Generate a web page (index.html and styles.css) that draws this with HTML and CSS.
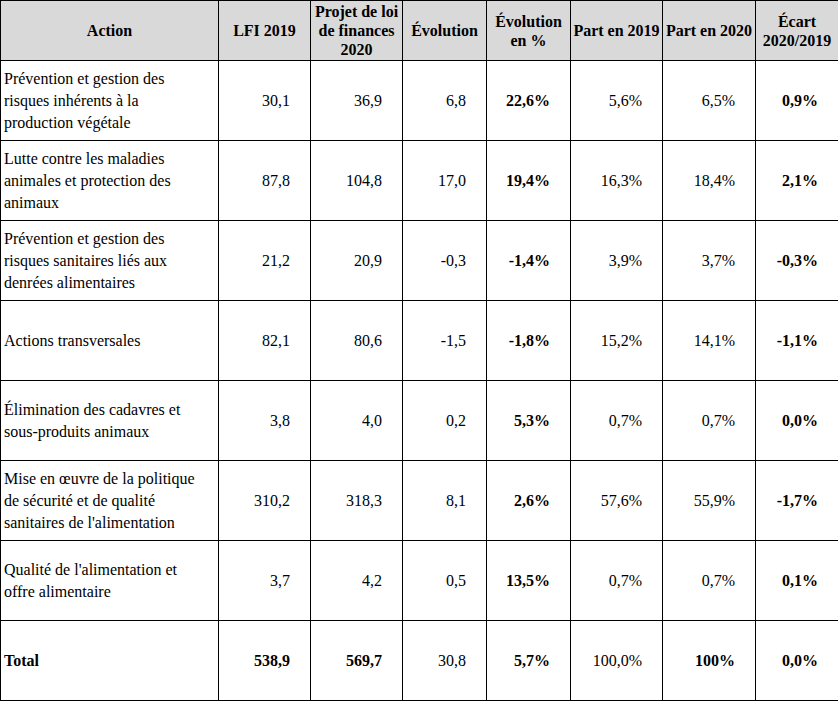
FILE: index.html
```html
<!DOCTYPE html>
<html lang="fr">
<head>
<meta charset="utf-8">
<title>Tableau</title>
<link rel="stylesheet" href="styles.css">
</head>
<body>
<table class="budget">
  <colgroup>
    <col class="c-action">
    <col class="c-num">
    <col class="c-num">
    <col class="c-evo">
    <col class="c-evo">
    <col class="c-num">
    <col class="c-num2">
    <col class="c-ecart">
  </colgroup>
  <thead>
    <tr>
      <th>Action</th>
      <th>LFI 2019</th>
      <th>Projet de loi<br>de finances<br>2020</th>
      <th>Évolution</th>
      <th>Évolution<br>en %</th>
      <th>Part en 2019</th>
      <th>Part en 2020</th>
      <th>Écart<br>2020/2019</th>
    </tr>
  </thead>
  <tbody>
    <tr>
      <td class="label">Prévention et gestion des<br>risques inhérents à la<br>production végétale</td>
      <td>30,1</td><td>36,9</td><td>6,8</td><td class="b">22,6%</td><td>5,6%</td><td>6,5%</td><td class="b">0,9%</td>
    </tr>
    <tr>
      <td class="label">Lutte contre les maladies<br>animales et protection des<br>animaux</td>
      <td>87,8</td><td>104,8</td><td>17,0</td><td class="b">19,4%</td><td>16,3%</td><td>18,4%</td><td class="b">2,1%</td>
    </tr>
    <tr>
      <td class="label">Prévention et gestion des<br>risques sanitaires liés aux<br>denrées alimentaires</td>
      <td>21,2</td><td>20,9</td><td>-0,3</td><td class="b">-1,4%</td><td>3,9%</td><td>3,7%</td><td class="b">-0,3%</td>
    </tr>
    <tr>
      <td class="label">Actions transversales</td>
      <td>82,1</td><td>80,6</td><td>-1,5</td><td class="b">-1,8%</td><td>15,2%</td><td>14,1%</td><td class="b">-1,1%</td>
    </tr>
    <tr>
      <td class="label">Élimination des cadavres et<br>sous-produits animaux</td>
      <td>3,8</td><td>4,0</td><td>0,2</td><td class="b">5,3%</td><td>0,7%</td><td>0,7%</td><td class="b">0,0%</td>
    </tr>
    <tr>
      <td class="label">Mise en œuvre de la politique<br>de sécurité et de qualité<br>sanitaires de l'alimentation</td>
      <td>310,2</td><td>318,3</td><td>8,1</td><td class="b">2,6%</td><td>57,6%</td><td>55,9%</td><td class="b">-1,7%</td>
    </tr>
    <tr>
      <td class="label">Qualité de l'alimentation et<br>offre alimentaire</td>
      <td>3,7</td><td>4,2</td><td>0,5</td><td class="b">13,5%</td><td>0,7%</td><td>0,7%</td><td class="b">0,1%</td>
    </tr>
    <tr class="total">
      <td class="label b">Total</td>
      <td class="b">538,9</td><td class="b">569,7</td><td>30,8</td><td class="b">5,7%</td><td>100,0%</td><td class="b">100%</td><td class="b">0,0%</td>
    </tr>
  </tbody>
</table>
</body>
</html>
```

FILE: styles.css
```css
html, body {
  margin: 0;
  padding: 0;
  background: #ffffff;
}

.budget {
  border-collapse: collapse;
  table-layout: fixed;
  width: 838px;
  font-family: "Liberation Serif", "Times New Roman", serif;
  font-size: 16px;
  color: #000000;
}

.c-action { width: 218px; }
.c-num { width: 92px; }
.c-num2 { width: 93px; }
.c-evo { width: 84px; }
.c-ecart { width: 83px; }

.budget th,
.budget td {
  border: 1px solid #000000;
  padding: 0;
}

.budget th {
  background: #d9d9d9;
  font-weight: bold;
  text-align: center;
  vertical-align: middle;
  height: 59px;
  line-height: 19px;
}

.budget td {
  height: 79px;
  line-height: 22px;
  text-align: right;
  vertical-align: middle;
  padding-right: 20px;
}

.budget td.label {
  text-align: left;
  padding-left: 3px;
  padding-right: 2px;
}

.budget .b {
  font-weight: bold;
}
```
